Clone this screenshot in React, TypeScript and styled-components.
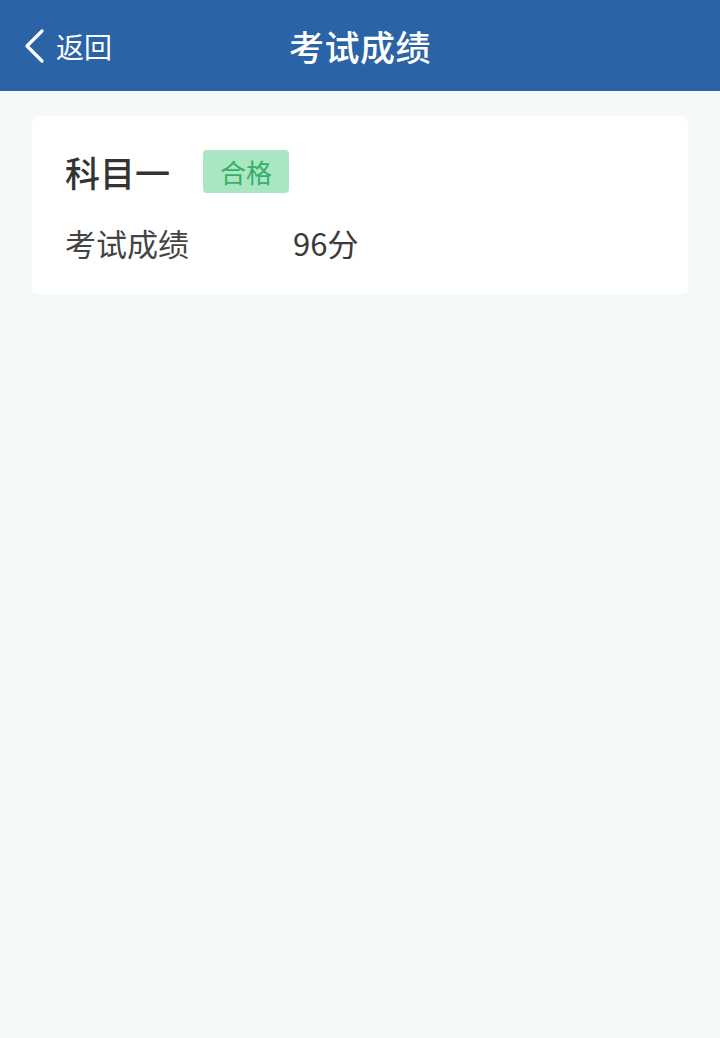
import styled, { createGlobalStyle } from 'styled-components';

const GlobalStyle = createGlobalStyle`
    html, body {
        margin: 0;
        padding: 0;
        background: #f4f8f9;
        font-family: "Noto Sans CJK SC", "Noto Sans", sans-serif;
    }
`;

const Page = styled.div`
    min-height: 1038px;
    background: #f4f8f9;
`;

const NavBar = styled.header`
    position: relative;
    height: 91px;
    background: #2b63a7;
    display: flex;
    align-items: center;
    justify-content: center;
    color: #fff;
`;

const BackButton = styled.button`
    position: absolute;
    left: 23px;
    top: 0;
    bottom: 0;
    display: flex;
    align-items: center;
    gap: 11px;
    padding: 0;
    background: none;
    border: none;
    color: #fff;
    font-family: inherit;
    font-size: 28px;
    cursor: pointer;
`;

const Title = styled.h1`
    margin: 0;
    font-size: 35px;
    font-weight: 500;
    letter-spacing: 0.5px;
`;

const Content = styled.main`
    padding: 25px 32px;
`;

const Card = styled.section`
    background: #fff;
    border-radius: 7px;
    padding: 34px 33px 30px;
    display: flex;
    flex-direction: column;
    gap: 26px;
`;

const SubjectRow = styled.div`
    display: flex;
    align-items: center;
    gap: 33px;
    height: 43px;
`;

const Subject = styled.span`
    font-size: 35px;
    font-weight: 500;
    color: #333;
`;

const Badge = styled.span`
    background: #a9e6c1;
    color: #35b06a;
    font-size: 26px;
    height: 43px;
    line-height: 43px;
    padding: 0 17px;
    border-radius: 4px;
`;

const ScoreRow = styled.div`
    display: flex;
    align-items: center;
    height: 46px;
    font-size: 31px;
    color: #444;
`;

const Label = styled.span`
    width: 228px;
`;

const Value = styled.span`
    color: #3a3a3a;
`;

function App() {
    return (
        <Page>
            <GlobalStyle />
            <NavBar>
                <BackButton>
                    <svg width="22" height="36" viewBox="0 0 22 36" fill="none">
                        <path d="M19 3 L4 18 L19 33" stroke="#fff" strokeWidth="3.2" strokeLinecap="round" strokeLinejoin="round" />
                    </svg>
                    返回
                </BackButton>
                <Title>考试成绩</Title>
            </NavBar>
            <Content>
                <Card>
                    <SubjectRow>
                        <Subject>科目一</Subject>
                        <Badge>合格</Badge>
                    </SubjectRow>
                    <ScoreRow>
                        <Label>考试成绩</Label>
                        <Value>96分</Value>
                    </ScoreRow>
                </Card>
            </Content>
        </Page>
    );
}

export default App;
